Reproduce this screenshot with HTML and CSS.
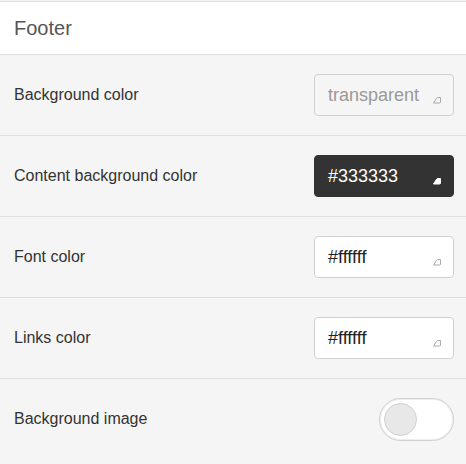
FILE: index.html
```html
<!DOCTYPE html>
<html>
<head>
<meta charset="utf-8">
<link rel="stylesheet" href="styles.css">
</head>
<body>
<div class="panel">
  <div class="panel-header">Footer</div>
  <div class="row">
    <span class="label">Background color</span>
    <div class="color-input is-empty">
      <span class="value">transparent</span>
      <svg class="corner" width="10" height="8" viewBox="0 0 10 8"><path d="M1.5 7 L4.6 2.2 Q5.1 1.5 6 1.5 L8.5 1.5 L8.5 6 Q8.5 7 7.5 7 Z" fill="none" stroke="#aaa" stroke-width="1"/></svg>
    </div>
  </div>
  <div class="row">
    <span class="label">Content background color</span>
    <div class="color-input is-dark">
      <span class="value">#333333</span>
      <svg class="corner" width="10" height="8" viewBox="0 0 10 8"><path d="M1.5 7 L4.6 2.2 Q5.1 1.5 6 1.5 L8.5 1.5 L8.5 6 Q8.5 7 7.5 7 Z" fill="#fff" stroke="#fff" stroke-width="1"/></svg>
    </div>
  </div>
  <div class="row">
    <span class="label">Font color</span>
    <div class="color-input">
      <span class="value">#ffffff</span>
      <svg class="corner" width="10" height="8" viewBox="0 0 10 8"><path d="M1.5 7 L4.6 2.2 Q5.1 1.5 6 1.5 L8.5 1.5 L8.5 6 Q8.5 7 7.5 7 Z" fill="none" stroke="#aaa" stroke-width="1"/></svg>
    </div>
  </div>
  <div class="row">
    <span class="label">Links color</span>
    <div class="color-input">
      <span class="value">#ffffff</span>
      <svg class="corner" width="10" height="8" viewBox="0 0 10 8"><path d="M1.5 7 L4.6 2.2 Q5.1 1.5 6 1.5 L8.5 1.5 L8.5 6 Q8.5 7 7.5 7 Z" fill="none" stroke="#aaa" stroke-width="1"/></svg>
    </div>
  </div>
  <div class="row last">
    <span class="label">Background image</span>
    <div class="toggle"><div class="knob"></div></div>
  </div>
</div>
</body>
</html>
```

FILE: styles.css
```css
html, body {
  margin: 0;
  padding: 0;
  background: #f5f5f5;
}
body {
  font-family: "Liberation Sans", Arial, sans-serif;
  padding-top: 1px;
}
.panel {
  width: 466px;
}
.panel-header {
  background: #fff;
  border-top: 1px solid #dedede;
  border-bottom: 1px solid #dedede;
  height: 52px;
  box-sizing: content-box;
  display: flex;
  align-items: center;
  padding-left: 14px;
  font-size: 20px;
  color: #555;
}
.row {
  height: 80px;
  border-bottom: 1px solid #dedede;
  display: flex;
  align-items: center;
  justify-content: space-between;
  padding: 0 12px 0 14px;
  background: #f5f5f5;
}
.row.last {
  border-bottom: none;
}
.label {
  font-size: 16px;
  color: #333;
}
.color-input {
  position: relative;
  width: 140px;
  height: 42px;
  box-sizing: border-box;
  border: 1px solid #d0d0d0;
  border-radius: 4px;
  background: #fff;
  display: flex;
  align-items: center;
  padding-left: 13px;
  font-size: 18px;
  color: #222;
}
.color-input.is-empty {
  background: #f5f5f5;
  color: #999;
}
.color-input.is-dark {
  background: #333;
  border-color: #333;
  color: #fff;
}
.corner {
  position: absolute;
  right: 11px;
  bottom: 11px;
}
.toggle {
  width: 75px;
  height: 43px;
  box-sizing: border-box;
  border: 1px solid #cfcfcf;
  border-radius: 22px;
  background: #fff;
  display: flex;
  align-items: center;
  padding-left: 4px;
  box-shadow: inset 0 0 0 1px #eee;
}
.knob {
  width: 33px;
  height: 33px;
  box-sizing: border-box;
  border-radius: 50%;
  background: #e8e8e8;
  border: 1px solid #cfcfcf;
}
```
